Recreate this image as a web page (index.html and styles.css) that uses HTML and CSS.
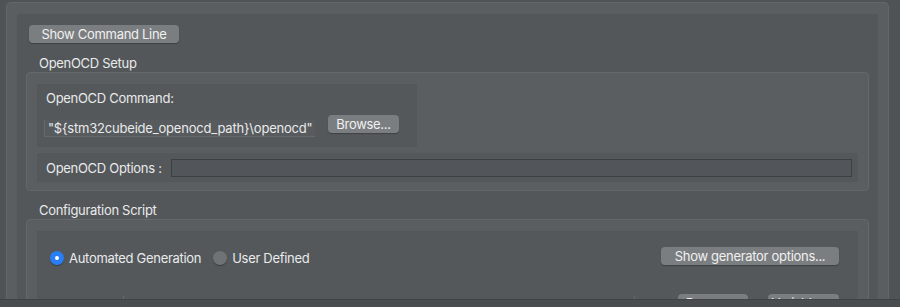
FILE: index.html
```html
<!DOCTYPE html>
<html lang="en">
<head>
    <meta charset="UTF-8">
    <meta name="viewport" content="width=device-width, initial-scale=1.0">
    <title>Debugger: OpenOCD Setup</title>
    <link rel="stylesheet" href="styles.css">
</head>
<body>
    <div class="window">
        <div class="frame">
            <div class="content">
                <button class="btn cmdline">Show Command Line</button>

                <!-- OpenOCD Setup -->
                <div class="section-title">OpenOCD Setup</div>
                <div class="group">
                    <div class="panel cmd-panel">
                        <div class="field-label">OpenOCD Command:</div>
                        <div class="cmd-row">
                            <div class="textfield path">"${stm32cubeide_openocd_path}\openocd"</div>
                            <button class="btn browse">Browse...</button>
                        </div>
                    </div>
                    <div class="panel options-row">
                        <span class="field-label">OpenOCD Options :</span>
                        <div class="textfield options"></div>
                    </div>
                </div>

                <!-- Configuration Script -->
                <div class="section-title script-title">Configuration Script</div>
                <div class="group">
                    <div class="panel script-panel">
                        <div class="radio-row">
                            <label class="radio checked"><span class="dot"></span>Automated Generation</label>
                            <label class="radio"><span class="dot"></span>User Defined</label>
                            <button class="btn generator">Show generator options...</button>
                        </div>
                        <div class="file-row">
                            <span class="file-label">Script File:</span>
                            <div class="file-field"></div>
                            <button class="btn small first">Browse...</button>
                            <button class="btn small">Variables...</button>
                        </div>
                    </div>
                </div>
            </div>
        </div>
    </div>
    <div class="statusbar"></div>
</body>
</html>
```

FILE: styles.css
```css
/* General Styles */
body {
    margin: 0;
    background: #4f5356;
    font-family: Inter, "Noto Sans", sans-serif;
    font-size: 13px;
    letter-spacing: -0.3px;
    color: #e9eaeb;
}

.window {
    height: 299px;
    overflow: hidden;
    padding-top: 2px;
    box-sizing: border-box;
}

.frame {
    margin-left: 6px;
    width: 883px;
    box-sizing: border-box;
    border: 1px solid #63676a;
    border-bottom: none;
    border-radius: 5px 5px 0 0;
    background: #5a5e61;
    padding: 11px 10px 0 10px;
}

.content {
    background: #53575a;
    padding: 11px 9px 40px 9px;
}

.btn {
    font-family: inherit;
    font-size: 13px;
    letter-spacing: -0.3px;
    color: #f0f0f0;
    background: #7b7e81;
    border: none;
    border-radius: 4px;
    height: 18px;
    padding: 0;
    line-height: 18px;
    box-shadow: 0 1px 1px rgba(0, 0, 0, 0.25);
}

.cmdline {
    width: 150px;
    margin-left: 3px;
}

.section-title {
    line-height: 16px;
    margin: 12px 0 1px 13px;
}

.script-title {
    margin-top: 11px;
}

.group {
    border: 1px solid #64686b;
    border-radius: 4px;
    background: #5a5e61;
    padding: 11px 10px 8px 10px;
}

.panel {
    background: #54585b;
}

.cmd-panel {
    width: 380px;
    height: 63px;
    box-sizing: border-box;
    padding: 6px 7px 0 7px;
}

.field-label {
    line-height: 16px;
    padding-left: 2px;
}

.cmd-row {
    display: flex;
    align-items: flex-start;
    margin-top: 9px;
}

.textfield {
    box-sizing: border-box;
    height: 17px;
    line-height: 16px;
    background: #575b5e;
    border-bottom: 1px solid #65696c;
    border-left: 1px solid #65696c;
}

.path {
    width: 271px;
    margin-top: 5px;
    padding-left: 3px;
    letter-spacing: -0.2px;
    white-space: nowrap;
    overflow: hidden;
}

.browse {
    width: 71px;
    margin-left: 13px;
}

.options-row {
    display: flex;
    align-items: center;
    margin-top: 6px;
    height: 29px;
    padding: 0 6px 0 7px;
}

.options {
    flex: 1;
    height: 18px;
    margin-left: 9px;
    background: #52565a;
    border: 1px solid #3d4043;
}

.script-panel {
    height: 80px;
    padding: 16px 19px 0 13px;
}

.radio-row {
    display: flex;
    align-items: center;
    height: 18px;
    margin-top: 2px;
}

.radio {
    display: flex;
    align-items: center;
    margin-right: 12px;
}

.dot {
    width: 14px;
    height: 14px;
    border-radius: 50%;
    background: #707376;
    margin-right: 5px;
    box-sizing: border-box;
    box-shadow: 0 1px 1px rgba(0, 0, 0, 0.3);
}

.checked .dot {
    border: 5px solid #2a7ef3;
    background-color: #ffffff;
}

.generator {
    width: 178px;
    margin-left: auto;
    margin-top: -4px;
}

.file-row {
    display: flex;
    align-items: flex-start;
    margin-top: 27px;
    height: 18px;
}

.file-label {
    width: 73px;
    color: #c9cacb;
    font-size: 12px;
    line-height: 18px;
    margin-top: 3px;
}

.file-field {
    width: 512px;
    height: 18px;
    margin-top: 2px;
    border-left: 1px solid #65696c;
    border-right: 1px solid #65696c;
}

.small {
    width: 71px;
    margin-left: 20px;
}

.small.first {
    margin-left: 43px;
}

.statusbar {
    height: 8px;
    background: #4a4d50;
    border-top: 1px solid #404346;
}
```
